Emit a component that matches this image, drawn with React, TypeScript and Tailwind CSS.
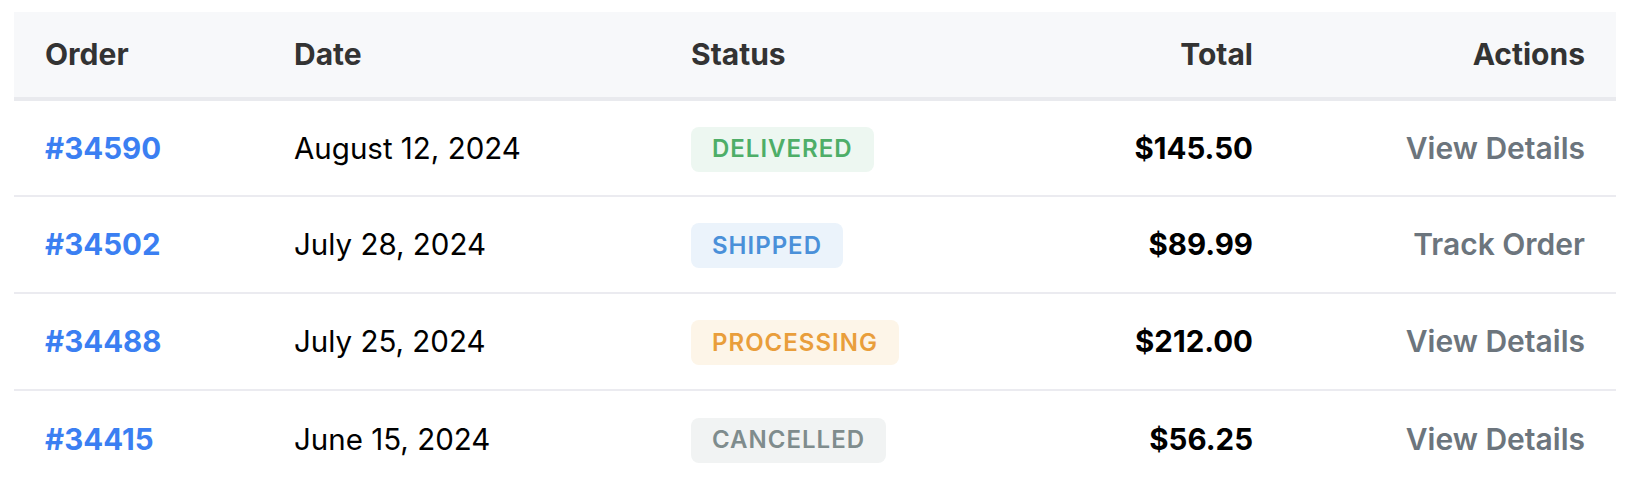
const orders = [
  { id: '#34590', date: 'August 12, 2024', status: 'DELIVERED', total: '$145.50', action: 'View Details' },
  { id: '#34502', date: 'July 28, 2024', status: 'SHIPPED', total: '$89.99', action: 'Track Order' },
  { id: '#34488', date: 'July 25, 2024', status: 'PROCESSING', total: '$212.00', action: 'View Details' },
  { id: '#34415', date: 'June 15, 2024', status: 'CANCELLED', total: '$56.25', action: 'View Details' },
];

const badgeStyles: Record<string, string> = {
  DELIVERED: 'bg-[#edf7f1] text-[#4eae68]',
  SHIPPED: 'bg-[#ebf3fb] text-[#4a90d9]',
  PROCESSING: 'bg-[#fdf5e8] text-[#e99e3b]',
  CANCELLED: 'bg-[#f1f3f3] text-[#7f8c8d]',
};

export default function App() {
  return (
    <div className="min-h-screen bg-white pl-[14px] pt-[12px] font-['Inter',sans-serif]">
      <table className="w-[1602px] table-fixed border-collapse">
        <colgroup>
          <col className="w-[249px]" />
          <col className="w-[397px]" />
          <col className="w-[340px]" />
          <col className="w-[284px]" />
          <col className="w-[332px]" />
        </colgroup>
        <thead>
          <tr className="h-[87px] border-b-4 border-[#e9eaee] bg-[#f7f8fa] text-[30px] font-semibold text-[#333]">
            <th className="px-[31px] text-left">Order</th>
            <th className="px-[31px] text-left">Date</th>
            <th className="px-[31px] text-left">Status</th>
            <th className="px-[31px] text-right">Total</th>
            <th className="px-[31px] text-right">Actions</th>
          </tr>
        </thead>
        <tbody>
          {orders.map((o) => (
            <tr key={o.id} className="h-[97px] border-b-2 border-[#ebebf0] last:border-0 text-[29.5px]">
              <td className="px-[31px] font-bold text-[#3b7ff2]">{o.id}</td>
              <td className="px-[31px] text-black">{o.date}</td>
              <td className="px-[31px]">
                <span className={`inline-flex h-[45px] items-center rounded-[8px] px-[21px] text-[24px] font-semibold tracking-[1px] ${badgeStyles[o.status]}`}>
                  {o.status}
                </span>
              </td>
              <td className="px-[31px] text-right font-bold text-black">{o.total}</td>
              <td className="px-[31px] text-right text-[30px] font-semibold text-[#6c757d]">{o.action}</td>
            </tr>
          ))}
        </tbody>
      </table>
    </div>
  );
}
